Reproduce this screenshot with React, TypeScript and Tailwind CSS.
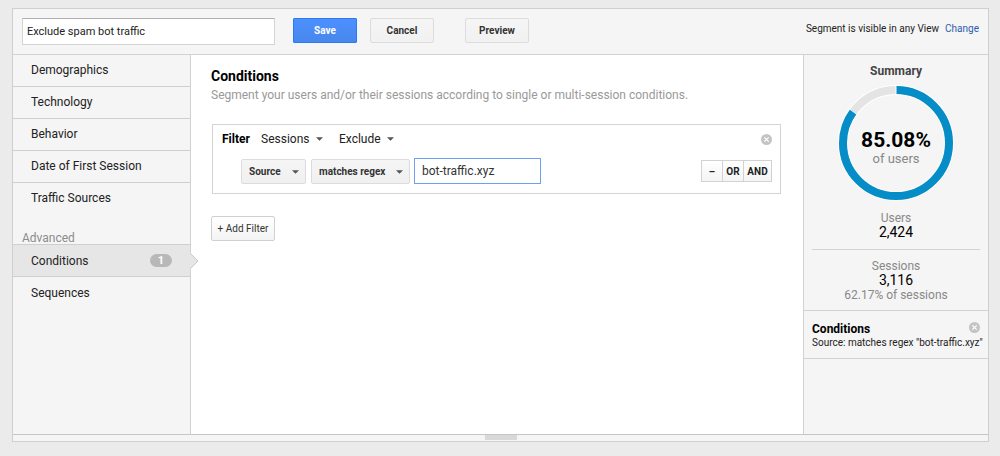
import { useState } from "react";
import type { ReactNode } from "react";

const sections = [
  "Demographics",
  "Technology",
  "Behavior",
  "Date of First Session",
  "Traffic Sources",
];

function CloseIcon() {
  return (
    <svg viewBox="0 0 12 12" className="block size-[11px]" aria-hidden="true">
      <circle cx="6" cy="6" r="6" fill="#c4c4c4" />
      <path d="M3.6 3.6l4.8 4.8M8.4 3.6l-4.8 4.8" stroke="#fff" strokeWidth="1.3" />
    </svg>
  );
}

function Dropdown({
  label,
  options,
  className,
  arrow,
}: {
  label: string;
  options: string[];
  className: string;
  arrow: string;
}) {
  return (
    <div className="relative">
      <select
        aria-label={label}
        className={`block appearance-none outline-none ${className}`}
      >
        {options.map((option) => (
          <option key={option}>{option}</option>
        ))}
      </select>
      <svg
        viewBox="0 0 8 4"
        className={`pointer-events-none absolute h-1 w-[7px] ${arrow}`}
        aria-hidden="true"
      >
        <path d="M0 0h8L4 4z" fill="#555" />
      </svg>
    </div>
  );
}

function ToolbarButton({ children, primary }: { children: ReactNode; primary?: boolean }) {
  return (
    <button
      type="button"
      className={
        primary
          ? "h-[25px] w-16 rounded-[1px] border border-[#2b7af5] bg-linear-to-b from-[#4d90fe] to-[#4787ed] text-[10px] font-bold text-white"
          : "h-[25px] w-16 rounded-[2px] border border-[#dcdcdc] bg-linear-to-b from-[#f5f5f5] to-[#f1f1f1] text-[10px] font-bold text-[#333]"
      }
    >
      {children}
    </button>
  );
}

function Donut({ percent }: { percent: number }) {
  const length = 2 * Math.PI * 53;
  return (
    <svg viewBox="0 0 116 116" className="col-start-1 row-start-1 size-[116px]" aria-hidden="true">
      <circle cx="58" cy="58" r="53" fill="none" stroke="#fff" strokeWidth="10" />
      <circle cx="58" cy="58" r="53" fill="none" stroke="#e4e4e4" strokeWidth="8" />
      <circle
        cx="58"
        cy="58"
        r="53"
        fill="none"
        stroke="#058dc7"
        strokeWidth="8"
        strokeDasharray={`${(length * percent) / 100} ${length}`}
        transform="rotate(-90 58 58)"
      />
      <path d="M58 0v10" stroke="#fff" strokeWidth="1" />
      <path d="M58 0v10" stroke="#fff" strokeWidth="1" transform="rotate(-53.7 58 58)" />
    </svg>
  );
}

function Sidebar() {
  return (
    <nav className="w-[178px] shrink-0 border-r border-[#d2d2d2] text-xs text-[#222]">
      <ul className="divide-y divide-[#cfcfcf]">
        {sections.map((section) => (
          <li key={section}>
            <a href="#" className="block h-[31px] pl-[18px] leading-[31px]">
              {section}
            </a>
          </li>
        ))}
      </ul>
      <h3 className="mt-[18px] pl-[9px] leading-3 text-[#8c8c8c]">Advanced</h3>
      <a
        href="#"
        className="relative flex h-[33px] items-center justify-between border-y border-[#cfcfcf] bg-[#e6e6e6] pr-[18px] pl-[18px]"
      >
        Conditions
        <span className="h-[13px] w-[22px] rounded-full bg-[#b8b8b8] text-center text-[11px] leading-[13px] font-bold text-white">
          1
        </span>
        <svg
          viewBox="0 0 9 16"
          className="absolute top-2 -right-[9px] h-4 w-[9px]"
          aria-hidden="true"
        >
          <path d="M0 0l8 8-8 8z" fill="#e6e6e6" />
          <path d="M0.5 0.5L8 8l-7.5 7.5" fill="none" stroke="#c8c8c8" />
        </svg>
      </a>
      <a href="#" className="block h-8 pl-[18px] leading-8">
        Sequences
      </a>
    </nav>
  );
}

function Conditions() {
  const [value, setValue] = useState("bot-traffic.xyz");

  return (
    <main className="min-w-0 flex-1 bg-white pt-[11px] pr-[22px] pb-6 pl-5">
      <h1 className="text-sm leading-5 font-bold text-black">Conditions</h1>
      <p className="text-xs leading-[18px] text-[#999]">
        Segment your users and/or their sessions according to single or multi-session conditions.
      </p>

      <section className="mt-5 ml-px border border-[#d4d4d4] pt-1 pr-2 pb-[9px] pl-[9px]">
        <div className="flex h-5 items-center">
          <h2 className="w-[39px] text-xs font-bold text-black">Filter</h2>
          <Dropdown
            label="Scope"
            options={["Sessions", "Users"]}
            className="h-5 w-[62px] text-xs text-[#222]"
            arrow="top-2 right-0"
          />
          <div className="w-4" />
          <Dropdown
            label="Mode"
            options={["Exclude", "Include"]}
            className="h-5 w-[55px] text-xs text-[#222]"
            arrow="top-2 right-0"
          />
          <button type="button" aria-label="Remove filter" className="ml-auto">
            <CloseIcon />
          </button>
        </div>
        <div className="mt-[9px] flex items-center pl-[19px]">
          <Dropdown
            label="Dimension"
            options={["Source", "Medium"]}
            className="h-[25px] w-[65px] rounded-[2px] border border-[#dcdcdc] bg-linear-to-b from-[#f5f5f5] to-[#f0f0f0] pl-[7px] text-[10px] font-bold text-[#333]"
            arrow="top-[11px] right-[7px]"
          />
          <div className="w-[5px]" />
          <Dropdown
            label="Match type"
            options={["matches regex", "contains"]}
            className="h-[25px] w-[99px] rounded-[2px] border border-[#dcdcdc] bg-linear-to-b from-[#f5f5f5] to-[#f0f0f0] pl-[7px] text-[10px] font-bold text-[#333]"
            arrow="top-[11px] right-[7px]"
          />
          <input
            type="text"
            aria-label="Value"
            value={value}
            onChange={(e) => setValue(e.target.value)}
            className="ml-1 h-[26px] w-[127px] border border-[#6f9ff5] bg-white px-[7px] text-xs text-[#333] outline-none"
          />
          <div className="ml-auto flex h-[22px] divide-x divide-[#d2d2d2] border border-[#d2d2d2] bg-linear-to-b from-white to-[#f4f4f4] text-[10px] font-bold text-[#222]">
            <button type="button" className="w-[21px]" aria-label="Remove condition">
              –
            </button>
            <button type="button" className="w-[21px]">
              OR
            </button>
            <button type="button" className="w-[27px]">
              AND
            </button>
          </div>
        </div>
      </section>

      <button
        type="button"
        className="mt-[22px] h-[25px] w-16 rounded-[2px] border border-[#d0d0d0] bg-linear-to-b from-white to-[#f4f4f4] text-[10px] text-[#333]"
      >
        + Add Filter
      </button>
    </main>
  );
}

function Summary() {
  return (
    <aside className="w-[185px] shrink-0 border-l border-[#d2d2d2] text-center">
      <h2 className="pt-2 text-xs leading-4 font-bold text-[#444]">Summary</h2>
      <div className="mt-[6px] grid place-items-center">
        <Donut percent={85.08} />
        <div className="col-start-1 row-start-1 pt-3">
          <p className="text-[21px] leading-5 font-bold text-black">85.08%</p>
          <p className="text-[13px] leading-[18px] text-[#888]">of users</p>
        </div>
      </div>
      <div className="mx-2 border-b border-[#d4d4d4] pt-[10px] pb-[10px]">
        <h3 className="text-xs leading-[14px] text-[#888]">Users</h3>
        <p className="text-sm leading-[14px] text-black">2,424</p>
      </div>
      <div className="border-b border-[#d2d2d2] pt-[9px] pb-[7px]">
        <h3 className="text-xs leading-[14px] text-[#888]">Sessions</h3>
        <p className="text-sm leading-[14px] text-black">3,116</p>
        <p className="text-xs leading-4 text-[#888]">62.17% of sessions</p>
      </div>
      <div className="border-b border-[#d2d2d2] px-2 pt-[11px] pb-[9px] text-left text-black">
        <div className="flex items-start justify-between">
          <h3 className="text-xs leading-[14px] font-bold">Conditions</h3>
          <button type="button" aria-label="Remove conditions">
            <CloseIcon />
          </button>
        </div>
        <p className="text-[10px] leading-[13px] whitespace-nowrap text-[#222]">
          Source: matches regex "bot-traffic.xyz"
        </p>
      </div>
    </aside>
  );
}

export default function App() {
  const [name, setName] = useState("Exclude spam bot traffic");

  return (
    <div className="flex min-h-screen flex-col bg-[#ebebeb] pt-2 pr-[11px] pb-[14px] pl-3 font-['Roboto',sans-serif]">
      <div className="flex flex-1 flex-col border border-[#cfcfcf] bg-[#f5f5f5]">
        <header className="flex items-start border-b border-[#d2d2d2] p-[9px]">
          <input
            type="text"
            aria-label="Segment name"
            value={name}
            onChange={(e) => setName(e.target.value)}
            className="h-[27px] w-[253px] border border-[#d4d4d4] border-t-[#b0b0b0] bg-white px-1 text-[11px] text-[#222] outline-none"
          />
          <div className="ml-[18px] flex">
            <ToolbarButton primary>Save</ToolbarButton>
            <div className="w-[13px]" />
            <ToolbarButton>Cancel</ToolbarButton>
            <div className="w-[31px]" />
            <ToolbarButton>Preview</ToolbarButton>
          </div>
          <p className="mt-1 ml-auto text-[10px] leading-[14px] text-[#222]">
            Segment is visible in any View
            <a href="#" className="ml-[6px] text-[#2a5db0]">
              Change
            </a>
          </p>
        </header>
        <div className="flex flex-1">
          <Sidebar />
          <Conditions />
          <Summary />
        </div>
        <footer className="flex h-[7px] justify-center border-t border-[#c6c6c6]">
          <div className="h-[5px] w-8 bg-[#d8d8d8]" />
        </footer>
      </div>
    </div>
  );
}
